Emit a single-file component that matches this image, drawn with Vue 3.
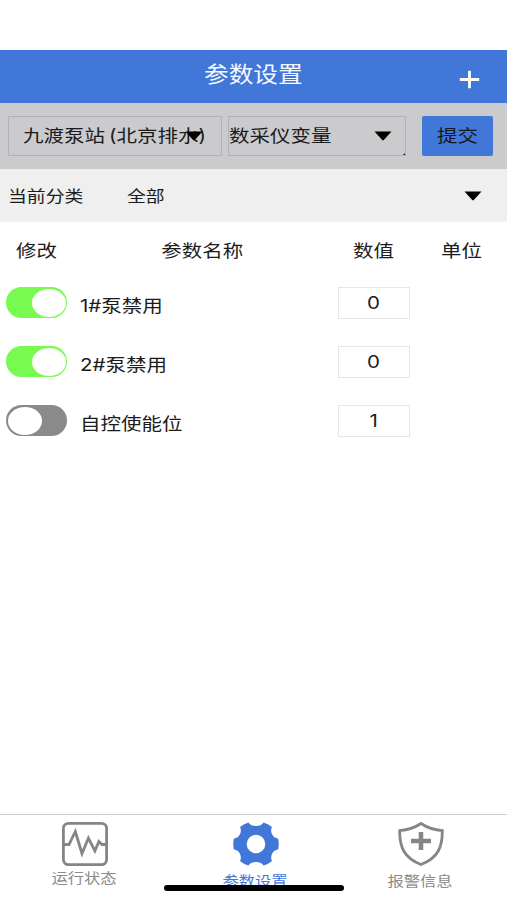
<script setup>
import { ref } from 'vue'

const rows = ref([
  { name: '1#泵禁用', value: 0, on: true },
  { name: '2#泵禁用', value: 0, on: true },
  { name: '自控使能位', value: 1, on: false },
])
</script>

<template>
  <main class="page">
    <header class="header">
      <span class="side"></span>
      <h1 class="wide title">参数设置</h1>
      <svg class="plus" viewBox="0 0 22 20"><path d="M11 .8v18.400M.8 10h20.400" /></svg>
    </header>

    <section class="filters">
      <div class="select station">
        <span class="wide">九渡泵站 (北京排水)</span>
        <svg class="arrow overlay" viewBox="0 0 18 10"><path d="M.5 .5h17L9.8 9q-.8.8-1.6 0z" /></svg>
      </div>
      <div class="select variable">
        <span class="wide">数采仪变量</span>
        <svg class="arrow" viewBox="0 0 18 10"><path d="M.5 .5h17L9.8 9q-.8.8-1.6 0z" /></svg>
      </div>
      <button class="submit"><span class="wide">提交</span></button>
    </section>

    <section class="category">
      <span class="wide label">当前分类</span>
      <span class="wide current">全部</span>
      <svg class="arrow" viewBox="0 0 18 10"><path d="M.5 .5h17L9.8 9q-.8.8-1.6 0z" /></svg>
    </section>

    <section class="table">
      <div class="head">
        <span class="wide">修改</span>
        <span class="wide">参数名称</span>
        <span class="wide">数值</span>
        <span class="wide">单位</span>
      </div>
      <div v-for="row in rows" :key="row.name" class="row">
        <div class="toggle" :class="{ on: row.on }" @click="row.on = !row.on"><i></i></div>
        <span class="wide name">{{ row.name }}</span>
        <div class="value"><span class="wide">{{ row.value }}</span></div>
      </div>
    </section>

    <nav class="tabs">
      <div class="tab status">
        <svg class="icon" viewBox="0 0 46 44">
          <rect x="1.4" y="1.4" width="43.2" height="41.2" rx="5" />
          <path d="M2 22.500h5L13.300 9.500 20 31.500l6.400-15.500 6.500 13 4-9.500 3 3H44" />
        </svg>
        <span class="wide">运行状态</span>
      </div>
      <div class="tab active">
        <svg class="icon" viewBox="0 0 46 44">
          <path class="gear" fill-rule="evenodd" d="M15.500 .5Q17.500 4 23 4Q28.500 4 30.500 .5Q35 1.500 39 5Q37 9 39.500 13Q41 16 45 16.500Q46.500 22 45 27.500Q41 28 39.500 31Q37 35 39 39Q35 42.500 30.500 43.500Q28.500 40 23 40Q17.500 40 15.500 43.500Q11 42.500 7 39Q9 35 6.500 31Q5 28 1 27.500Q-.5 22 1 16.500Q5 16 6.500 13Q9 9 7 5Q11 1.500 15.500 .5ZM23 12.800a9.300 9.200 0 1 0 0 18.400a9.300 9.200 0 1 0 0-18.400Z" />
        </svg>
        <span class="wide">参数设置</span>
      </div>
      <div class="tab alarm">
        <svg class="icon" viewBox="0 0 46 44">
          <path d="M23 1.500C17 5.500 9 8 1.700 8.600 1.500 25 6 36 23 42.500 40 36 44.500 25 44.300 8.600 37 8 29 5.500 23 1.500Z" />
          <path class="cross" d="M23 10v18M13 19h20" />
        </svg>
        <span class="wide">报警信息</span>
      </div>
      <div class="home-bar"></div>
    </nav>
  </main>
</template>

<style>
body {
  background: #fff;
}
</style>

<style scoped>
.page {
  box-sizing: border-box;
  display: flex;
  flex-direction: column;
  width: 507px;
  height: 900px;
  padding-top: 50px;
  overflow: hidden;
  color: #1c1c1c;
  font-family: Inter, "Noto Sans CJK SC", sans-serif;
  font-size: 17.6px;
  line-height: 24px;
}

.wide {
  display: inline-block;
  white-space: nowrap;
  transform: scaleX(1.165);
}

.header {
  display: flex;
  align-items: center;
  justify-content: space-between;
  height: 53px;
  padding: 0 27px 0 26px;
  background: #4177d9;
}

.side {
  width: 21px;
}

.title {
  margin: 0 0 6px;
  color: #f4f8ff;
  font-size: 21.2px;
  font-weight: 400;
}

.plus {
  width: 21px;
  height: 19px;
  margin-top: 6px;
  fill: none;
  stroke: #fff;
  stroke-width: 3;
}

.filters {
  box-sizing: border-box;
  display: flex;
  height: 66px;
  padding: 13px 14px 13px 8px;
  background: #cbcbcd;
}

.select {
  box-sizing: border-box;
  position: relative;
  display: flex;
  align-items: center;
  height: 40px;
  border: 1px solid #b2b2b4;
}

.select .wide {
  transform-origin: left center;
}

.station {
  width: 214px;
  padding-left: 14px;
  word-spacing: -1.5px;
}

.variable {
  justify-content: space-between;
  width: 178px;
  margin-left: 6px;
  padding-right: 13px;
}

.variable::after {
  position: absolute;
  right: 0;
  bottom: 0;
  border: 1.5px solid #111;
  border-top-color: transparent;
  border-left-color: transparent;
  content: "";
}

.arrow {
  width: 18px;
  height: 10px;
  fill: #000;
}

.overlay {
  position: absolute;
  top: 14px;
  right: 18px;
}

.submit {
  width: 71px;
  height: 40px;
  margin-left: auto;
  padding: 0;
  border: 0;
  border-radius: 2px;
  background: #4177d9;
  color: #14181f;
  font: inherit;
}

.category {
  box-sizing: border-box;
  display: grid;
  grid-template-columns: 119px 1fr auto;
  align-items: center;
  height: 53px;
  padding: 0 25px 0 8px;
  background: #efefef;
  font-size: 16.2px;
}

.category .wide {
  justify-self: start;
  transform-origin: left center;
}

.head {
  display: grid;
  grid-template-columns: 74px 257px 86px 90px;
  align-items: center;
  justify-items: center;
  height: 51px;
}

.head .wide {
  margin-top: 6px;
}

.row {
  display: grid;
  grid-template-columns: 74px 258px 72px;
  align-items: center;
  height: 59px;
  padding-left: 6px;
}

.toggle {
  box-sizing: border-box;
  display: flex;
  width: 61px;
  height: 31px;
  padding: 1.5px;
  border-radius: 16px;
  background: #8a8a8a;
}

.toggle i {
  width: 34px;
  height: 28px;
  border-radius: 50%;
  background: #fff;
}

.toggle.on {
  justify-content: flex-end;
  background: #78fa50;
}

.name {
  justify-self: start;
  margin-top: 6px;
  transform-origin: left center;
}

.value {
  box-sizing: border-box;
  display: flex;
  align-items: center;
  justify-content: center;
  height: 32px;
  padding-top: 1px;
  border: 1px solid #e6e6e6;
}

.tabs {
  position: relative;
  box-sizing: border-box;
  display: grid;
  grid-template-columns: 170px 172px 158px;
  height: 86px;
  margin-top: auto;
  padding-top: 7px;
  border-top: 1px solid #cdcdcd;
}

.tab {
  display: flex;
  flex-direction: column;
  align-items: center;
  color: #8a8a8a;
  font-size: 14px;
  line-height: 20px;
}

.tab .wide {
  margin: 5px 3px 0 0;
}

.status .wide {
  margin-top: 2px;
}

.icon {
  width: 46px;
  height: 44px;
  fill: none;
  stroke: #858585;
  stroke-width: 2.8;
}

.cross {
  stroke-width: 4.5;
}

.active {
  color: #4177d9;
}

.gear {
  fill: #4177d9;
  stroke: none;
}

.home-bar {
  position: absolute;
  bottom: 9px;
  left: 164px;
  width: 180px;
  height: 6px;
  border-radius: 3px;
  background: #000;
}
</style>
